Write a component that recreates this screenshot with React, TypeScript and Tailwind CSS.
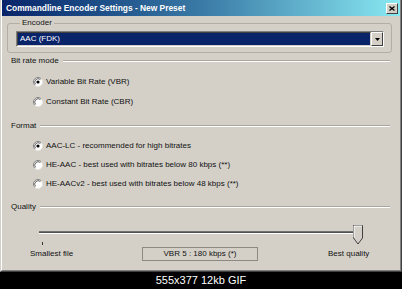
import React from 'react';

const ui = { fontFamily: '"Liberation Sans", Arial, sans-serif' };

function Radio({ checked }: { checked?: boolean }) {
  return (
    <svg width="10" height="10" viewBox="0 0 10 10" className="shrink-0">
      <circle cx="5" cy="5" r="4.5" fill="#ffffff" />
      <path d="M1.8 8.2 A4.5 4.5 0 0 1 8.2 1.8" fill="none" stroke="#808080" strokeWidth="1" />
      <path d="M2.6 7.4 A3.4 3.4 0 0 1 7.4 2.6" fill="none" stroke="#404040" strokeWidth="0.8" />
      <path d="M8.2 1.8 A4.5 4.5 0 0 1 1.8 8.2" fill="none" stroke="#e8e6e0" strokeWidth="1" />
      {checked && <circle cx="5" cy="5" r="1.6" fill="#000000" />}
    </svg>
  );
}

function Heading({ label }: { label: string }) {
  return (
    <div className="flex items-center h-[10px] pl-[9px] pr-[10px]">
      <span>{label}</span>
      <div className="ml-[4px] flex-1 h-[2px] border-t border-t-[#aaa69d] border-b border-b-white" />
    </div>
  );
}

function Option({ label, checked, h }: { label: string; checked?: boolean; h: string }) {
  return (
    <div className={`flex items-center pl-[31px] gap-[3px] ${h}`}>
      <Radio checked={checked} />
      <span>{label}</span>
    </div>
  );
}

export default function App() {
  return (
    <div className="w-[402px] h-[289px] bg-black overflow-hidden" style={ui}>
      <div className="h-[272px] bg-[#d4d0c8] border-r border-b border-[#404040] border-l border-l-[#d4d0c8]">
        <div className="h-full flex flex-col border-r border-b border-[#808080] border-l border-l-white text-[8px] text-[#111]">
          {/* title bar */}
          <div className="h-[16px] flex items-center justify-between pl-[4px] pr-[2px] bg-gradient-to-r from-[#0a246a] via-[#3a7aa6] to-[#8ae9f2]">
            <span className="text-white font-bold text-[8.4px]">Commandline Encoder Settings - New Preset</span>
            <div className="w-[12px] h-[11px] bg-[#d4d0c8] border border-t-white border-l-white border-r-[#404040] border-b-[#404040] flex items-center justify-center">
              <svg width="6" height="5" viewBox="0 0 6 5">
                <path d="M0.5 0.5 L5.5 4.5 M5.5 0.5 L0.5 4.5" stroke="#000" strokeWidth="1.3" />
              </svg>
            </div>
          </div>

          {/* encoder group */}
          <fieldset className="mt-[2px] ml-[5px] w-[385px] border border-[#b2aea6] rounded-[3px] pl-[8px] pr-[7px] pb-[5px]">
            <legend className="ml-[4px] px-[2px] h-[10px] leading-[10px]">Encoder</legend>
            <div className="mt-[3px] h-[16px] flex border border-t-[#808080] border-l-[#808080] border-r-white border-b-white">
              <div className="flex-1 flex items-center border border-t-[#404040] border-l-[#404040] border-r-[#d4d0c8] border-b-[#d4d0c8] bg-[#0a246a]">
                <span className="pl-[2px] text-white">AAC (FDK)</span>
              </div>
              <div className="w-[12px] bg-[#d4d0c8] border border-t-white border-l-white border-r-[#404040] border-b-[#404040] flex items-center justify-center">
                <svg width="5" height="3" viewBox="0 0 5 3">
                  <path d="M0 0 H5 L2.5 3 Z" fill="#000" />
                </svg>
              </div>
            </div>
          </fieldset>

          <div className="mt-[3px]">
            <Heading label="Bit rate mode" />
          </div>
          <div className="mt-[6px]">
            <Option label="Variable Bit Rate (VBR)" checked h="h-[20px]" />
            <Option label="Constant Bit Rate (CBR)" h="h-[20px]" />
          </div>

          <div className="mt-[9px]">
            <Heading label="Format" />
          </div>
          <div className="mt-[5px]">
            <Option label="AAC-LC - recommended for high bitrates" checked h="h-[19px]" />
            <Option label="HE-AAC - best used with bitrates below 80 kbps (**)" h="h-[19px]" />
            <Option label="HE-AACv2 - best used with bitrates below 48 kbps (**)" h="h-[19px]" />
          </div>

          <div className="mt-[9px]">
            <Heading label="Quality" />
          </div>

          {/* slider */}
          <div className="relative mt-[19px] ml-[37px] w-[320px] h-[3px] border-t border-t-[#707070] border-b border-b-white bg-[#505050]">
            <svg width="10" height="20" viewBox="0 0 10 20" className="absolute left-[314px] -top-[7px]">
              <path d="M0.5 0.5 H9.5 V13 L5 19 L0.5 13 Z" fill="#d4d0c8" stroke="#404040" />
              <path d="M1 12.5 V1 H9" fill="none" stroke="#ffffff" />
            </svg>
          </div>
          <div className="ml-[40px] mt-[8px] w-[1px] h-[3px] bg-[#333]" />

          <div className="mt-[2px] flex items-center h-[14px] pl-[28px]">
            <span className="w-[112px]">Smallest file</span>
            <div className="w-[116px] h-[14px] flex items-center justify-center border border-[#8e8a83]">
              VBR 5 : 180 kbps (*)
            </div>
            <span className="ml-[70px]">Best quality</span>
          </div>
        </div>
      </div>
      <div className="h-[17px] flex items-center justify-center text-white text-[11px]" style={{ fontFamily: 'Arial, "Liberation Sans", sans-serif' }}>
        555x377 12kb GIF
      </div>
    </div>
  );
}
